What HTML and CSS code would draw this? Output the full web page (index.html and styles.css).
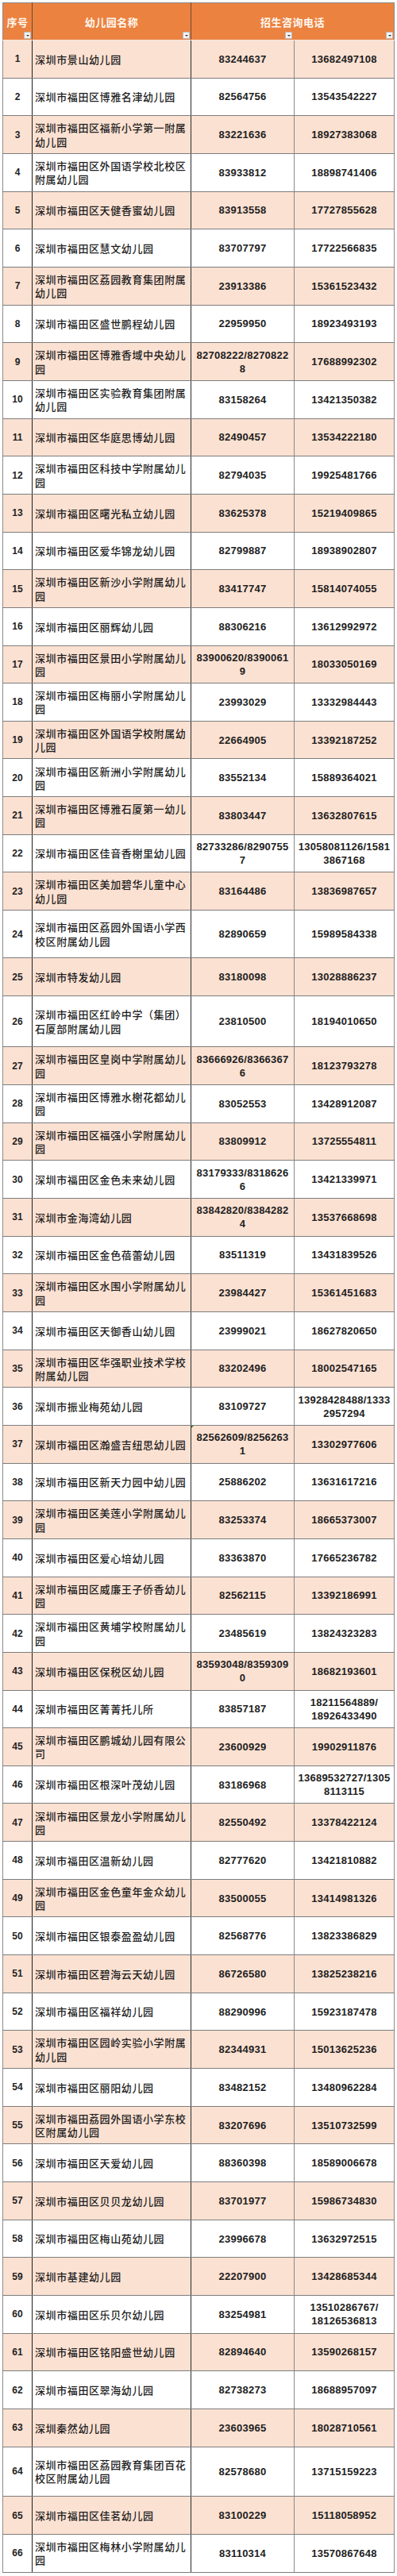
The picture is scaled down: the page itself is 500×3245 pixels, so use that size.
FILE: index.html
```html
<!DOCTYPE html>
<html lang="zh-CN">
<head>
<meta charset="utf-8">
<title>福田区幼儿园招生咨询电话</title>
<link rel="stylesheet" href="styles.css">
</head>
<body>
<table class="sheet">
<colgroup><col class="c-no"><col class="c-name"><col class="c-tel"><col class="c-mob"></colgroup>
<thead>
<tr class="head">
<th class="h-no">序号<span class="filter"></span></th>
<th class="h-name">幼儿园名称<span class="filter"></span></th>
<th class="h-tel" colspan="2">招生咨询电话<span class="filter f-mid"></span><span class="filter"></span></th>
</tr>
</thead>
<tbody>
<tr><td class="no">1</td><td class="name">深圳市景山幼儿园</td><td class="num">83244637</td><td class="num">13682497108</td></tr>
<tr><td class="no">2</td><td class="name">深圳市福田区博雅名津幼儿园</td><td class="num">82564756</td><td class="num">13543542227</td></tr>
<tr><td class="no">3</td><td class="name">深圳市福田区福新小学第一附属幼儿园</td><td class="num">83221636</td><td class="num">18927383068</td></tr>
<tr><td class="no">4</td><td class="name">深圳市福田区外国语学校北校区附属幼儿园</td><td class="num">83933812</td><td class="num">18898741406</td></tr>
<tr><td class="no">5</td><td class="name">深圳市福田区天健香蜜幼儿园</td><td class="num">83913558</td><td class="num">17727855628</td></tr>
<tr><td class="no">6</td><td class="name">深圳市福田区慧文幼儿园</td><td class="num">83707797</td><td class="num">17722566835</td></tr>
<tr><td class="no">7</td><td class="name">深圳市福田区荔园教育集团附属幼儿园</td><td class="num">23913386</td><td class="num">15361523432</td></tr>
<tr><td class="no">8</td><td class="name">深圳市福田区盛世鹏程幼儿园</td><td class="num">22959950</td><td class="num">18923493193</td></tr>
<tr><td class="no">9</td><td class="name">深圳市福田区博雅香域中央幼儿园</td><td class="num">82708222/82708228</td><td class="num">17688992302</td></tr>
<tr><td class="no">10</td><td class="name">深圳市福田区实验教育集团附属幼儿园</td><td class="num">83158264</td><td class="num">13421350382</td></tr>
<tr><td class="no">11</td><td class="name">深圳市福田区华庭思博幼儿园</td><td class="num">82490457</td><td class="num">13534222180</td></tr>
<tr><td class="no">12</td><td class="name">深圳市福田区科技中学附属幼儿园</td><td class="num">82794035</td><td class="num">19925481766</td></tr>
<tr><td class="no">13</td><td class="name">深圳市福田区曙光私立幼儿园</td><td class="num">83625378</td><td class="num">15219409865</td></tr>
<tr><td class="no">14</td><td class="name">深圳市福田区爱华锦龙幼儿园</td><td class="num">82799887</td><td class="num">18938902807</td></tr>
<tr><td class="no">15</td><td class="name">深圳市福田区新沙小学附属幼儿园</td><td class="num">83417747</td><td class="num">15814074055</td></tr>
<tr><td class="no">16</td><td class="name">深圳市福田区丽辉幼儿园</td><td class="num">88306216</td><td class="num">13612992972</td></tr>
<tr><td class="no">17</td><td class="name">深圳市福田区景田小学附属幼儿园</td><td class="num">83900620/83900619</td><td class="num">18033050169</td></tr>
<tr><td class="no">18</td><td class="name">深圳市福田区梅丽小学附属幼儿园</td><td class="num">23993029</td><td class="num">13332984443</td></tr>
<tr><td class="no">19</td><td class="name">深圳市福田区外国语学校附属幼儿园</td><td class="num">22664905</td><td class="num">13392187252</td></tr>
<tr><td class="no">20</td><td class="name">深圳市福田区新洲小学附属幼儿园</td><td class="num">83552134</td><td class="num">15889364021</td></tr>
<tr><td class="no">21</td><td class="name">深圳市福田区博雅石厦第一幼儿园</td><td class="num">83803447</td><td class="num">13632807615</td></tr>
<tr><td class="no">22</td><td class="name">深圳市福田区佳音香榭里幼儿园</td><td class="num">82733286/82907557</td><td class="num">13058081126/15813867168</td></tr>
<tr><td class="no">23</td><td class="name">深圳市福田区美加碧华儿童中心幼儿园</td><td class="num">83164486</td><td class="num">13836987657</td></tr>
<tr class="tall-a"><td class="no">24</td><td class="name">深圳市福田区荔园外国语小学西校区附属幼儿园</td><td class="num">82890659</td><td class="num">15989584338</td></tr>
<tr><td class="no">25</td><td class="name">深圳市特发幼儿园</td><td class="num">83180098</td><td class="num">13028886237</td></tr>
<tr class="tall-b"><td class="no">26</td><td class="name">深圳市福田区红岭中学（集团）石厦部附属幼儿园</td><td class="num">23810500</td><td class="num">18194010650</td></tr>
<tr><td class="no">27</td><td class="name">深圳市福田区皇岗中学附属幼儿园</td><td class="num">83666926/83663676</td><td class="num">18123793278</td></tr>
<tr><td class="no">28</td><td class="name">深圳市福田区博雅水榭花都幼儿园</td><td class="num">83052553</td><td class="num">13428912087</td></tr>
<tr><td class="no">29</td><td class="name">深圳市福田区福强小学附属幼儿园</td><td class="num">83809912</td><td class="num">13725554811</td></tr>
<tr><td class="no">30</td><td class="name">深圳市福田区金色未来幼儿园</td><td class="num">83179333/83186266</td><td class="num">13421339971</td></tr>
<tr><td class="no">31</td><td class="name">深圳市金海湾幼儿园</td><td class="num">83842820/83842824</td><td class="num">13537668698</td></tr>
<tr><td class="no">32</td><td class="name">深圳市福田区金色蓓蕾幼儿园</td><td class="num">83511319</td><td class="num">13431839526</td></tr>
<tr><td class="no">33</td><td class="name">深圳市福田区水围小学附属幼儿园</td><td class="num">23984427</td><td class="num">15361451683</td></tr>
<tr><td class="no">34</td><td class="name">深圳市福田区天御香山幼儿园</td><td class="num">23999021</td><td class="num">18627820650</td></tr>
<tr><td class="no">35</td><td class="name">深圳市福田区华强职业技术学校附属幼儿园</td><td class="num">83202496</td><td class="num">18002547165</td></tr>
<tr><td class="no">36</td><td class="name">深圳市振业梅苑幼儿园</td><td class="num">83109727</td><td class="num">13928428488/13332957294</td></tr>
<tr><td class="no">37</td><td class="name">深圳市福田区瀚盛吉纽思幼儿园</td><td class="num flag">82562609/82562631</td><td class="num">13302977606</td></tr>
<tr><td class="no">38</td><td class="name">深圳市福田区新天力园中幼儿园</td><td class="num">25886202</td><td class="num">13631617216</td></tr>
<tr><td class="no">39</td><td class="name">深圳市福田区美莲小学附属幼儿园</td><td class="num">83253374</td><td class="num">18665373007</td></tr>
<tr><td class="no">40</td><td class="name">深圳市福田区爱心培幼儿园</td><td class="num">83363870</td><td class="num">17665236782</td></tr>
<tr><td class="no">41</td><td class="name">深圳市福田区威廉王子侨香幼儿园</td><td class="num">82562115</td><td class="num">13392186991</td></tr>
<tr><td class="no">42</td><td class="name">深圳市福田区黄埔学校附属幼儿园</td><td class="num">23485619</td><td class="num">13824323283</td></tr>
<tr><td class="no">43</td><td class="name">深圳市福田区保税区幼儿园</td><td class="num">83593048/83593090</td><td class="num">18682193601</td></tr>
<tr><td class="no">44</td><td class="name">深圳市福田区菁菁托儿所</td><td class="num">83857187</td><td class="num">18211564889/<br>18926433490</td></tr>
<tr><td class="no">45</td><td class="name">深圳市福田区鹏城幼儿园有限公司</td><td class="num">23600929</td><td class="num">19902911876</td></tr>
<tr><td class="no">46</td><td class="name">深圳市福田区根深叶茂幼儿园</td><td class="num">83186968</td><td class="num">13689532727/13058113115</td></tr>
<tr><td class="no">47</td><td class="name">深圳市福田区景龙小学附属幼儿园</td><td class="num">82550492</td><td class="num">13378422124</td></tr>
<tr><td class="no">48</td><td class="name">深圳市福田区温新幼儿园</td><td class="num">82777620</td><td class="num">13421810882</td></tr>
<tr><td class="no">49</td><td class="name">深圳市福田区金色童年金众幼儿园</td><td class="num">83500055</td><td class="num">13414981326</td></tr>
<tr><td class="no">50</td><td class="name">深圳市福田区银泰盈盈幼儿园</td><td class="num">82568776</td><td class="num">13823386829</td></tr>
<tr><td class="no">51</td><td class="name">深圳市福田区碧海云天幼儿园</td><td class="num">86726580</td><td class="num">13825238216</td></tr>
<tr><td class="no">52</td><td class="name">深圳市福田区福祥幼儿园</td><td class="num">88290996</td><td class="num">15923187478</td></tr>
<tr><td class="no">53</td><td class="name">深圳市福田区园岭实验小学附属幼儿园</td><td class="num">82344931</td><td class="num">15013625236</td></tr>
<tr><td class="no">54</td><td class="name">深圳市福田区丽阳幼儿园</td><td class="num">83482152</td><td class="num">13480962284</td></tr>
<tr><td class="no">55</td><td class="name">深圳市福田荔园外国语小学东校区附属幼儿园</td><td class="num">83207696</td><td class="num">13510732599</td></tr>
<tr><td class="no">56</td><td class="name">深圳市福田区天爱幼儿园</td><td class="num">88360398</td><td class="num">18589006678</td></tr>
<tr><td class="no">57</td><td class="name">深圳市福田区贝贝龙幼儿园</td><td class="num">83701977</td><td class="num">15986734830</td></tr>
<tr><td class="no">58</td><td class="name">深圳市福田区梅山苑幼儿园</td><td class="num">23996678</td><td class="num">13632972515</td></tr>
<tr><td class="no">59</td><td class="name">深圳市基建幼儿园</td><td class="num">22207900</td><td class="num">13428685344</td></tr>
<tr><td class="no">60</td><td class="name">深圳市福田区乐贝尔幼儿园</td><td class="num">83254981</td><td class="num">13510286767/<br>18126536813</td></tr>
<tr><td class="no">61</td><td class="name">深圳市福田区铭阳盛世幼儿园</td><td class="num">82894640</td><td class="num">13590268157</td></tr>
<tr><td class="no">62</td><td class="name">深圳市福田区翠海幼儿园</td><td class="num">82738273</td><td class="num">18688957097</td></tr>
<tr><td class="no">63</td><td class="name">深圳秦然幼儿园</td><td class="num">23603965</td><td class="num">18028710561</td></tr>
<tr class="tall-c"><td class="no">64</td><td class="name">深圳市福田区荔园教育集团百花校区附属幼儿园</td><td class="num">82578680</td><td class="num">13715159223</td></tr>
<tr><td class="no">65</td><td class="name">深圳市福田区佳茗幼儿园</td><td class="num">83100229</td><td class="num">15118058952</td></tr>
<tr><td class="no">66</td><td class="name">深圳市福田区梅林小学附属幼儿园</td><td class="num">83110314</td><td class="num">13570867648</td></tr>
</tbody>
</table>
</body>
</html>
```

FILE: styles.css
```css
html, body {
  margin: 0;
  padding: 0;
  background: #ffffff;
}

body {
  padding-top: 3px;
  font-family: "Noto Sans CJK SC", "Liberation Sans", sans-serif;
  color: #1e1e1e;
}

.sheet {
  margin-left: 3px;
  width: 493px;
  table-layout: fixed;
  border-collapse: collapse;
  border: 1px solid #8c8c8c;
}

.c-no { width: 37px; }
.c-name { width: 200px; }
.c-tel { width: 130px; }
.c-mob { width: 126px; }

.head {
  height: 47px;
  background: #ec8240;
}

.head th {
  position: relative;
  padding: 0;
  color: #fff8f0;
  font-size: 13px;
  font-weight: 700;
  letter-spacing: 0.5px;
  text-align: center;
  vertical-align: middle;
  border-bottom: 1px solid #f4e6dc;
  border-right: 1px solid #6b4a34;
}

.head th.h-tel { border-right: 1px solid #8c8c8c; }

.filter {
  position: absolute;
  right: 1px;
  bottom: 1px;
  width: 7px;
  height: 7px;
  background: #f3f3f3;
  border: 1px solid #b9b9b9;
}

.filter::after {
  content: "";
  position: absolute;
  left: 1.5px;
  top: 2.5px;
  border-left: 2px solid transparent;
  border-right: 2px solid transparent;
  border-top: 2px solid #3a3a3a;
}

.filter.f-mid { right: 128px; }

tbody tr { height: 47.67px; }
tbody tr:nth-child(odd) { background: #fbe1d2; }
tbody tr.tall-a { height: 60.3px; }
tbody tr.tall-b { height: 64.3px; }
tbody tr.tall-c { height: 62.7px; }

td {
  padding: 0;
  vertical-align: middle;
  border-bottom: 1px solid #7d7d7d;
  border-right: 1px solid #8a8a8a;
  word-break: break-all;
}

td.no {
  text-align: center;
  font-family: "Liberation Sans", sans-serif;
  font-weight: 700;
  font-size: 12px;
  border-right: 1px solid #202020;
}

td.name {
  padding: 0 2px 0 3px;
  font-size: 13px;
  font-weight: 500;
  line-height: 17.3px;
  letter-spacing: 0.6px;
  border-right: 1px solid #2a2a2a;
}

td.num {
  text-align: center;
  font-family: "Liberation Sans", sans-serif;
  font-weight: 700;
  font-size: 13px;
  letter-spacing: 0.25px;
  line-height: 17px;
  padding: 0 5px;
}

td.num + td.num { padding: 0 3px; }

td.flag { position: relative; }

td.flag::before {
  content: "";
  position: absolute;
  left: 0;
  top: 0;
  border-top: 3px solid #2e8b2e;
  border-right: 3px solid transparent;
}
```
